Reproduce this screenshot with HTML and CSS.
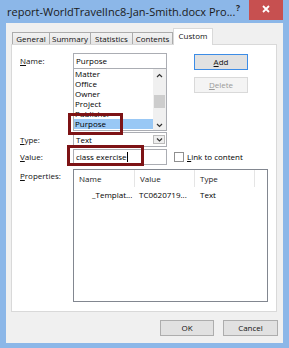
FILE: index.html
```html
<!DOCTYPE html>
<html>
<head>
<meta charset="utf-8">
<link rel="stylesheet" href="styles.css">
</head>
<body>
<div class="window">
  <div class="titlebar">
    <div class="title">report-WorldTravelInc8-Jan-Smith.docx Pro...</div>
    <div class="help">?</div>
    <div class="close">
      <svg width="8" height="8" viewBox="0 0 8 8"><path d="M1 1L7 7M7 1L1 7" stroke="#fff" stroke-width="1.8"/></svg>
    </div>
  </div>
  <div class="client">
    <div class="tabs">
      <div class="tab t1">General</div>
      <div class="tab t2">Summary</div>
      <div class="tab t3">Statistics</div>
      <div class="tab t4">Contents</div>
      <div class="tab active">Custom</div>
    </div>
    <div class="panel">
      <div class="row row-name">
        <div class="label"><u>N</u>ame:</div>
        <div class="combo">
          <div class="input">Purpose</div>
          <div class="list">
            <div class="items">
              <div class="item">Matter</div>
              <div class="item">Office</div>
              <div class="item">Owner</div>
              <div class="item">Project</div>
              <div class="item">Publisher</div>
              <div class="item selected">Purpose</div>
            </div>
            <div class="scrollbar">
              <svg class="arr" width="13" height="10" viewBox="0 0 13 10"><path d="M4 6L6.5 3.5L9 6" fill="none" stroke="#333" stroke-width="1.2"/></svg>
              <div class="track"><div class="thumb"></div></div>
              <svg class="arr" width="13" height="10" viewBox="0 0 13 10"><path d="M4 4L6.5 6.5L9 4" fill="none" stroke="#333" stroke-width="1.2"/></svg>
            </div>
          </div>
        </div>
        <div class="side-buttons">
          <div class="btn default"><u>A</u>dd</div>
          <div class="btn disabled"><u>D</u>elete</div>
        </div>
      </div>
      <div class="row row-type">
        <div class="label"><u>T</u>ype:</div>
        <div class="dropdown">
          <span>Text</span>
          <div class="dd-btn"><svg width="9" height="6" viewBox="0 0 9 6"><path d="M2 1.5L4.5 4L7 1.5" fill="none" stroke="#333" stroke-width="1.2"/></svg></div>
        </div>
      </div>
      <div class="row row-value">
        <div class="label"><u>V</u>alue:</div>
        <div class="input value-input">class exercise<span class="caret"></span></div>
        <div class="check"></div>
        <div class="check-label"><u>L</u>ink to content</div>
      </div>
      <div class="row row-props">
        <div class="label"><u>P</u>roperties:</div>
        <div class="listview">
          <div class="lv-head">
            <div class="hc c1">Name</div>
            <div class="hc c2">Value</div>
            <div class="hc c3">Type</div>
            <div class="hc c4"></div>
          </div>
          <div class="lv-row">
            <div class="rc c1 indent">_Templat...</div>
            <div class="rc c2">TC0620719...</div>
            <div class="rc c3">Text</div>
          </div>
        </div>
      </div>
      <div class="mark mark1"></div>
      <div class="mark mark2"></div>
    </div>
    <div class="footer">
      <div class="btn ok">OK</div>
      <div class="btn cancel">Cancel</div>
    </div>
  </div>
</div>
</body>
</html>
```

FILE: styles.css
```css
* { box-sizing: border-box; }
html, body { margin: 0; padding: 0; }
body {
  width: 289px;
  height: 348px;
  overflow: hidden;
  font-family: "Open Sans", "Noto Sans", sans-serif;
  font-size: 8px;
  color: #000;
}
u { text-decoration: underline; text-underline-offset: 1px; }
.window {
  width: 289px;
  height: 348px;
  background: #8cb7e8;
  display: flex;
  flex-direction: column;
}
.titlebar {
  height: 23px;
  display: flex;
  align-items: flex-start;
  flex: none;
}
.title {
  padding: 4px 0 0 7px;
  font-size: 11px;
  line-height: 16px;
  color: #1a1a1a;
  flex: 1;
  white-space: nowrap;
}
.help {
  font-size: 8.5px;
  font-weight: bold;
  line-height: 10px;
  padding-top: 3px;
  margin-right: 9px;
  color: #222;
}
.close {
  width: 34px;
  height: 20px;
  background: #c75050;
  margin-right: 6px;
  display: flex;
  align-items: center;
  justify-content: center;
  padding-bottom: 3px;
}
.client {
  flex: 1;
  margin: 0 6px 5px 6px;
  background: #f0f0f0;
  display: flex;
  flex-direction: column;
}
.tabs {
  display: flex;
  align-items: flex-end;
  height: 21px;
  padding: 5px 0 0 6px;
  position: relative;
  z-index: 2;
}
.tab {
  height: 12px;
  line-height: 11px;
  border: 1px solid #acacac;
  border-bottom: none;
  margin-right: -1px;
  background: linear-gradient(#f2f2f2, #e5e5e5);
  text-align: center;
  white-space: nowrap;
  color: #111;
}
.t1 { width: 38px; }
.t2 { width: 42px; }
.t3 { width: 43px; }
.t4 { width: 41px; }
.tab.active {
  height: 17px;
  width: 40px;
  margin-bottom: -1px;
  background: #fff;
  border-color: #d9d9d9;
  line-height: 13px;
  margin-left: 1px;
}
.panel {
  position: relative;
  height: 268px;
  margin: 0 6px 0 5px;
  background: #fff;
  border: 1px solid #d9d9d9;
  padding: 8px 0 0 8px;
  z-index: 1;
}
.row {
  display: flex;
  align-items: flex-start;
}
.label {
  width: 53px;
  flex: none;
  line-height: 16px;
  color: #111;
}
.combo {
  width: 94px;
  flex: none;
}
.input {
  height: 16px;
  border: 1px solid #abadb3;
  background: #fff;
  line-height: 14px;
  padding-left: 2px;
  white-space: nowrap;
}
.list {
  height: 62px;
  border: 1px solid #abadb3;
  border-top: none;
  display: flex;
}
.items {
  flex: 1;
}
.item {
  height: 10px;
  line-height: 10px;
  padding-left: 1px;
  white-space: nowrap;
  overflow: hidden;
}
.item.selected {
  background: #99c8f5;
}
.scrollbar {
  width: 13px;
  flex: none;
  background: #f0f0f0;
  display: flex;
  flex-direction: column;
}
.arr { display: block; flex: none; }
.scrollbar .arr:first-child { margin-top: 2px; }
.track {
  flex: 1;
  padding-top: 14px;
}
.thumb {
  width: 11px;
  height: 13px;
  margin-left: 1px;
  background: #cdcdcd;
}
.side-buttons {
  margin-left: 27px;
  padding-top: 1px;
  display: flex;
  flex-direction: column;
  gap: 7px;
}
.btn {
  width: 54px;
  height: 16px;
  border: 1px solid #adadad;
  background: #e1e1e1;
  text-align: center;
  line-height: 14px;
  color: #111;
}
.btn.default {
  border-color: #3c8ce6;
}
.btn.disabled {
  background: #f4f4f4;
  border-color: #d9d9d9;
  color: #9a9a9a;
}
.row-type { margin-top: 1px; }
.row-type .label { line-height: 15px; }
.dropdown {
  width: 94px;
  height: 15px;
  border: 1px solid #abadb3;
  display: flex;
  align-items: center;
  padding-left: 2px;
}
.dropdown span { flex: 1; line-height: 13px; }
.dd-btn {
  width: 12px;
  height: 9px;
  border: 1px solid #bcbcbc;
  background: #eee;
  margin-right: 1px;
  display: flex;
  align-items: center;
  justify-content: center;
}
.row-value { margin-top: 2px; }
.value-input {
  width: 94px;
  flex: none;
}
.caret {
  display: inline-block;
  width: 1px;
  height: 10px;
  background: #000;
  vertical-align: -2px;
}
.check {
  width: 10px;
  height: 10px;
  border: 1px solid #8f8f8f;
  background: #fff;
  margin: 3px 0 0 7px;
  flex: none;
}
.check-label {
  margin-left: 3px;
  line-height: 16px;
}
.row-props { margin-top: 4px; }
.row-props .label { line-height: 14px; }
.listview {
  width: 195px;
  height: 133px;
  border: 1px solid #828790;
}
.lv-head {
  display: flex;
  height: 17px;
}
.hc {
  line-height: 17px;
  padding-left: 5px;
  border-right: 1px solid #e5e5e5;
  color: #222;
}
.c1 { width: 61px; flex: none; }
.c2 { width: 60px; flex: none; }
.c3 { width: 60px; flex: none; }
.c4 { flex: 1; border-right: none; }
.lv-row {
  display: flex;
  height: 16px;
}
.rc {
  line-height: 16px;
  padding-left: 4px;
  white-space: nowrap;
}
.rc.c3 { padding-left: 5px; }
.rc.indent { padding-left: 18px; }
.mark {
  position: absolute;
  border: 3px solid #7d1315;
}
.mark1 { left: 56px; top: 68px; width: 55px; height: 22px; }
.mark2 { left: 55px; top: 100px; width: 77px; height: 21px; }
.footer {
  display: flex;
  justify-content: flex-end;
  gap: 9px;
  padding: 8px 5px 0 0;
}
.ok { width: 54px; }
.cancel { width: 55px; }
```
